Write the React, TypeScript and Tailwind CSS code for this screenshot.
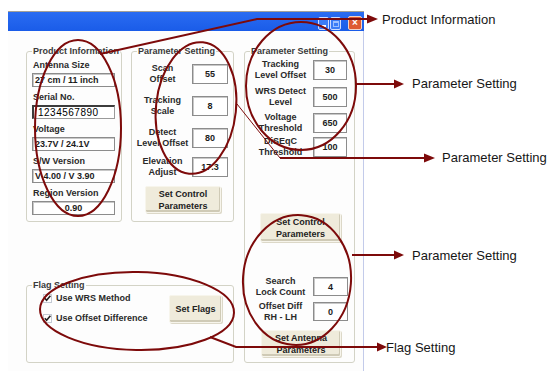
import React from 'react'

const RED = '#7d0a0a'

function Box({ children, className = '' }: { children?: React.ReactNode; className?: string }) {
    return (
        <div
            className={
                'flex items-center shrink-0 bg-white border border-[#8c8c8c] shadow-[inset_1px_1px_0_#c8c8c8] text-[9px] font-bold leading-[12px] text-[#1c1c1c] ' +
                className
            }
        >
            {children}
        </div>
    )
}

function Btn({ children, className = '' }: { children: React.ReactNode; className?: string }) {
    return (
        <div
            className={
                'flex flex-col items-center justify-center shrink-0 bg-[#efebdb] rounded-[2px] border border-[#f7f5ec] shadow-[inset_-1px_-2px_0_#cfcab6,1px_1px_0_#dcd8c8] text-[9px] font-bold leading-[12px] text-[#222] text-center ' +
                className
            }
        >
            {children}
        </div>
    )
}

function Group({ label, className = '', children }: { label: string; className?: string; children: React.ReactNode }) {
    return (
        <fieldset className={'border border-[#d3d3c6] rounded-[3px] min-w-0 ' + className}>
            <legend className="ml-[5px] px-[1px] text-[9px] font-bold leading-[11px] text-[#3a3a3a] whitespace-nowrap">{label}</legend>
            {children}
        </fieldset>
    )
}

function Field({ label, value, center, serial }: { label: string; value: string; center?: boolean; serial?: boolean }) {
    return (
        <div className="flex flex-col">
            <div className="h-[11px] text-[9px] font-bold leading-[11px] text-[#2a2a2a] pl-[1px] whitespace-nowrap">{label}</div>
            {serial ? (
                <div className="mt-[2px] h-[14px] w-[83px] flex items-center bg-white border-t-2 border-l-2 border-[#3c3c3c] border-r border-b border-r-[#9a9a9a] border-b-[#9a9a9a] pl-[4px] text-[10px] leading-[12px] text-black tracking-[0.5px]">
                    {value}
                </div>
            ) : (
                <Box className={'mt-[2px] h-[14px] w-[83px] px-[2px] whitespace-nowrap ' + (center ? 'justify-center' : '')}>{value}</Box>
            )}
        </div>
    )
}

function Row({ lines, value, labelW, inputW, h = 20, className = '' }: { lines: string[]; value: string; labelW: string; inputW: string; h?: number; className?: string }) {
    return (
        <div className={'flex items-center ' + (h === 20 ? 'h-[20px] ' : 'h-[19px] ') + className}>
            <div className={'flex flex-col items-center shrink-0 text-[9px] font-bold leading-[11px] text-[#2a2a2a] ' + labelW}>
                {lines.map((l) => (
                    <span key={l} className="whitespace-nowrap">{l}</span>
                ))}
            </div>
            <Box className={'justify-center h-full ' + inputW}>{value}</Box>
        </div>
    )
}

function Check({ label }: { label: string }) {
    return (
        <div className="flex items-center h-[11px] gap-[4px]">
            <svg width="9" height="9" viewBox="0 0 9 9">
                <rect x="0.5" y="0.5" width="8" height="8" fill="#fff" stroke="#c4cad4" />
                <path d="M1.8 4.2 L3.6 6.2 L7.4 1.8" fill="none" stroke="#222" strokeWidth="1.6" />
            </svg>
            <span className="text-[9px] font-bold leading-[11px] text-[#2a2a2a] whitespace-nowrap">{label}</span>
        </div>
    )
}

function Annotations() {
    return (
        <svg className="absolute left-0 top-0 pointer-events-none" width="550" height="371" viewBox="0 0 550 371">
            <g fill="none" stroke={RED} strokeWidth="2">
                <ellipse cx="78" cy="128" rx="43" ry="88" />
                <ellipse cx="196" cy="108" rx="40" ry="66" transform="rotate(6 196 108)" />
                <ellipse cx="301" cy="86" rx="55" ry="64" />
                <ellipse cx="297" cy="280" rx="54" ry="65" transform="rotate(4 297 280)" />
                <ellipse cx="137" cy="311" rx="97" ry="39" transform="rotate(1 137 311)" />
                <polyline points="100,54 257,19 369,19" />
                <line x1="356" y1="84" x2="396" y2="84" />
                <polyline points="280,158 426,158" />
                <line x1="352" y1="255" x2="396" y2="255" />
                <polyline points="210,337 236,347 379,347" />
            </g>
            <line x1="237" y1="104" x2="280" y2="158" stroke={RED} strokeWidth="1" />
            <g fill={RED}>
                <polygon points="367,14.5 378,19 367,23.5" />
                <polygon points="394,79.5 404,84 394,88.5" />
                <polygon points="424,153.5 435,158 424,162.5" />
                <polygon points="394,250.5 404,255 394,259.5" />
                <polygon points="377,342.5 387,347 377,351.5" />
            </g>
        </svg>
    )
}

const notes = [
    { text: 'Product Information', cls: 'left-[382px] top-[12px]' },
    { text: 'Parameter Setting', cls: 'left-[412px] top-[76px]' },
    { text: 'Parameter Setting', cls: 'left-[442px] top-[150px]' },
    { text: 'Parameter Setting', cls: 'left-[412px] top-[248px]' },
    { text: 'Flag Setting', cls: 'left-[386px] top-[340px]' },
]

export default function App() {
    return (
        <div className="relative w-[550px] h-[371px] overflow-hidden bg-white font-['Liberation_Sans',Arial,sans-serif]">
            <div className="ml-[8px] pt-[11px] w-[356px] flex flex-col">
                {/* Title bar */}
                <div className="h-[20px] border-t border-[#a4a198] bg-gradient-to-b from-[#2a6cf2] to-[#1a5ce8] flex items-end justify-end pb-[1px] pr-[2px]">
                    <div className="w-[11px] h-[13px] mr-[1px] rounded-[2px] border border-[#cfdcff] bg-[#3c7cf6] flex items-end justify-center pb-[2px]">
                        <div className="w-[4px] h-[2px] bg-white" />
                    </div>
                    <div className="w-[11px] h-[13px] mr-[7px] rounded-[2px] border border-[#cfdcff] bg-[#3c7cf6] flex items-center justify-center">
                        <div className="w-[6px] h-[6px] border border-[#9ec0ff] border-t-2" />
                    </div>
                    <div className="w-[14px] h-[14px] rounded-[2px] border border-[#f3d2c5] bg-[#de5a32] flex items-center justify-center text-white text-[10px] font-bold leading-none">
                        ×
                    </div>
                </div>

                {/* Body */}
                <div className="h-[340px] bg-[#fdfdfd] border-r border-[#c3cbea] flex pl-[18px] pt-[15px] pb-[8px] gap-[10px]">
                    <div className="w-[208px] flex flex-col justify-between">
                        <div className="flex gap-[9px] h-[176px]">
                            <Group label="Product Information" className="w-[96px]">
                                <div className="flex flex-col gap-[5px] mt-[3px] px-[5px]">
                                    <Field label="Antenna Size" value="27 cm / 11 inch" />
                                    <Field label="Serial No." value="1234567890" serial />
                                    <Field label="Voltage" value="23.7V  /  24.1V" />
                                    <Field label="S/W Version" value="V 4.00  /  V 3.90" />
                                    <Field label="Region Version" value="0.90" center />
                                </div>
                            </Group>
                            <Group label="Parameter Setting" className="w-[103px]">
                                <div className="flex flex-col pl-[1px]">
                                    <Row lines={['Scan', 'Offset']} value="55" labelW="w-[59px]" inputW="w-[36px]" className="mt-[7px]" />
                                    <Row lines={['Tracking', 'Scale']} value="8" labelW="w-[59px]" inputW="w-[36px]" className="mt-[12px]" />
                                    <Row lines={['Detect', 'Level Offset']} value="80" labelW="w-[59px]" inputW="w-[36px]" className="mt-[12px]" />
                                    <Row lines={['Elevation', 'Adjust']} value="17.3" labelW="w-[59px]" inputW="w-[36px]" className="mt-[9px]" />
                                    <Btn className="mt-[9px] ml-[12px] w-[76px] h-[27px]">
                                        <span>Set Control</span>
                                        <span>Parameters</span>
                                    </Btn>
                                </div>
                            </Group>
                        </div>
                        <Group label="Flag Setting" className="h-[83px]">
                            <div className="flex items-center justify-between mt-[2px] pl-[16px] pr-[11px]">
                                <div className="flex flex-col gap-[9px]">
                                    <Check label="Use WRS Method" />
                                    <Check label="Use Offset Difference" />
                                </div>
                                <Btn className="w-[53px] h-[28px]">Set Flags</Btn>
                            </div>
                        </Group>
                    </div>

                    <Group label="Parameter Setting" className="w-[111px]">
                        <div className="flex flex-col pl-[3px]">
                            <Row lines={['Tracking', 'Level Offset']} value="30" labelW="w-[65px]" inputW="w-[34px]" className="mt-[3px]" />
                            <Row lines={['WRS Detect', 'Level']} value="500" labelW="w-[65px]" inputW="w-[34px]" className="mt-[7px]" />
                            <Row lines={['Voltage', 'Threshold']} value="650" labelW="w-[65px]" inputW="w-[34px]" className="mt-[6px]" />
                            <Row lines={['DiSEqC', 'Threshold']} value="100" labelW="w-[65px]" inputW="w-[34px]" className="mt-[4px]" />
                            <Btn className="mt-[56px] ml-[12px] w-[81px] h-[29px]">
                                <span>Set Control</span>
                                <span>Parameters</span>
                            </Btn>
                            <Row lines={['Search', 'Lock Count']} value="4" labelW="w-[65px]" inputW="w-[35px]" h={19} className="mt-[35px]" />
                            <Row lines={['Offset Diff', 'RH - LH']} value="0" labelW="w-[65px]" inputW="w-[35px]" h={19} className="mt-[6px]" />
                            <Btn className="mt-[9px] ml-[13px] w-[80px] h-[27px]">
                                <span>Set Antenna</span>
                                <span>Parameters</span>
                            </Btn>
                        </div>
                    </Group>
                </div>
            </div>

            <Annotations />

            {notes.map((n, i) => (
                <span key={i} className={'absolute text-[13px] leading-[16px] text-[#161616] whitespace-nowrap ' + n.cls}>
                    {n.text}
                </span>
            ))}
        </div>
    )
}
